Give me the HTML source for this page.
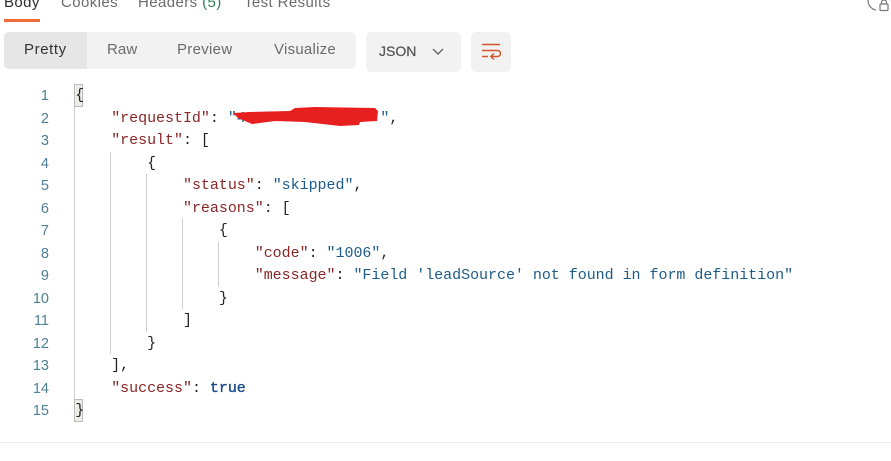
<!DOCTYPE html>
<html><head><meta charset="utf-8">
<style>
html,body{margin:0;padding:0;background:#fff}
#p{position:relative;width:891px;height:461px;overflow:hidden;background:#fff;font-family:"Liberation Sans",sans-serif}
.a{position:absolute;white-space:pre}
.t{font-size:15px;color:#6b6b6b;line-height:20px;letter-spacing:.4px}
.l{position:absolute;font:15px/22px "Liberation Mono",monospace;letter-spacing:-.03px;white-space:pre;left:75.3px;color:#222}
.n{position:absolute;font:14.5px/22px "Liberation Sans",sans-serif;color:#4d7f96;width:49px;left:0;text-align:right}
.k{color:#8a2626}.s{color:#1d5c8a}.b{color:#174a8a;-webkit-text-stroke:.35px #174a8a}
.g{position:absolute;width:1px;background:#cfcfcf}
.m{position:absolute;left:74px;width:9px;height:23px;background:#eaeee6;border:1px solid #bdbdbd;box-sizing:border-box}
</style></head><body><div id="p">
<div class="a t" style="left:4px;top:-7px;color:#2b2b2b">Body</div>
<div class="a t" style="left:61px;top:-7px">Cookies</div>
<div class="a t" style="left:138px;top:-7px">Headers <span style="color:#2f7d55">(5)</span></div>
<div class="a t" style="left:244px;top:-7px">Test Results</div>
<div class="a" style="left:4px;top:19px;width:36px;height:3px;background:#f26b3a"></div>
<svg class="a" style="left:866px;top:0" width="25" height="12" viewBox="0 0 25 12"><path d="M2 0C2 5 5 9 10 10" fill="none" stroke="#777" stroke-width="1.2"/><rect x="14" y="4" width="8" height="6.5" rx="1" fill="none" stroke="#777" stroke-width="1.2"/><path d="M15.5 4V2.5a2.5 2.5 0 0 1 5 0V4" fill="none" stroke="#777" stroke-width="1.2"/></svg>

<div class="a" style="left:4px;top:32px;width:352px;height:37px;background:#f2f2f2;border-radius:5px"></div>
<div class="a" style="left:4px;top:32px;width:83px;height:37px;background:#e6e6e6;border-radius:5px 0 0 5px"></div>
<div class="a t" style="left:24px;top:40px;color:#333;letter-spacing:.6px">Pretty</div>
<div class="a t" style="left:107px;top:40px;letter-spacing:.1px">Raw</div>
<div class="a t" style="left:177px;top:40px;letter-spacing:.3px">Preview</div>
<div class="a t" style="left:274px;top:40px;letter-spacing:.25px">Visualize</div>
<div class="a" style="left:366px;top:32px;width:95px;height:40px;background:#f2f2f2;border-radius:5px"></div>
<div class="a t" style="left:379px;top:41px;font-size:14px;color:#555;letter-spacing:0;-webkit-text-stroke:.25px #555">JSON</div>
<svg class="a" style="left:431px;top:47px" width="14" height="10" viewBox="0 0 14 10"><path d="M2 2l5 5 5-5" fill="none" stroke="#666" stroke-width="1.4"/></svg>
<div class="a" style="left:471px;top:32px;width:40px;height:40px;background:#f2f2f2;border-radius:5px"></div>
<svg class="a" style="left:481px;top:43px" width="20" height="18" viewBox="0 0 20 18"><path d="M1 1.500H19M1 7.500H16.500a3 3 0 0 1 0 6H10M13 10.500l-3.200 3 3.200 3M1 13.500H7" fill="none" stroke="#d2562d" stroke-width="1.500"/></svg>

<div class="g" style="left:74px;top:107px;height:292px"></div>
<div class="g" style="left:110px;top:152px;height:202px"></div>
<div class="g" style="left:146px;top:174px;height:158px"></div>
<div class="g" style="left:182px;top:218px;height:91px"></div>
<div class="g" style="left:218px;top:242px;height:45px"></div>
<div class="m" style="top:84px"></div>
<div class="m" style="top:399px"></div>

<div class="n" style="top:85px">1</div>
<div class="n" style="top:108px">2</div>
<div class="n" style="top:130px">3</div>
<div class="n" style="top:153px">4</div>
<div class="n" style="top:175px">5</div>
<div class="n" style="top:198px">6</div>
<div class="n" style="top:220px">7</div>
<div class="n" style="top:243px">8</div>
<div class="n" style="top:265px">9</div>
<div class="n" style="top:288px">10</div>
<div class="n" style="top:310px">11</div>
<div class="n" style="top:333px">12</div>
<div class="n" style="top:355px">13</div>
<div class="n" style="top:378px">14</div>
<div class="n" style="top:400px">15</div>

<div class="l" style="top:85px">{</div>
<div class="l" style="top:108px">    <span class="k">"requestId"</span>: <span class="s">"4               "</span>,</div>
<div class="l" style="top:130px">    <span class="k">"result"</span>: [</div>
<div class="l" style="top:153px">        {</div>
<div class="l" style="top:175px">            <span class="k">"status"</span>: <span class="s">"skipped"</span>,</div>
<div class="l" style="top:198px">            <span class="k">"reasons"</span>: [</div>
<div class="l" style="top:220px">                {</div>
<div class="l" style="top:243px">                    <span class="k">"code"</span>: <span class="s">"1006"</span>,</div>
<div class="l" style="top:265px">                    <span class="k">"message"</span>: <span class="s">"Field 'leadSource' not found in form definition"</span></div>
<div class="l" style="top:288px">                }</div>
<div class="l" style="top:310px">            ]</div>
<div class="l" style="top:333px">        }</div>
<div class="l" style="top:355px">    ],</div>
<div class="l" style="top:378px">    <span class="k">"success"</span>: <span class="b">true</span></div>
<div class="l" style="top:400px">}</div>

<svg class="a" style="left:230px;top:105px" width="155" height="25" viewBox="0 0 155 25"><path d="M3 8L20 7L60 6L65 3L85 2L145 3L148 6L147 16L130 17L129 20L110 21L75 17L45 16L22 19L8 13Z" fill="#e81f1f"/></svg>

<div class="a" style="left:0;top:442px;width:891px;height:1px;background:#ebebeb"></div>
</div></body></html>
